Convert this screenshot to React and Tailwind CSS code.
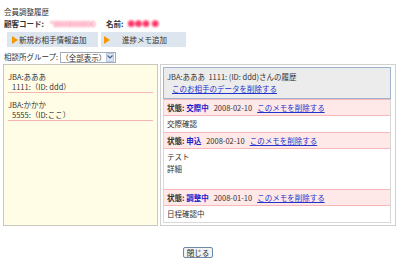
const font = { fontFamily: '"Noto Sans CJK JP", "Liberation Sans", sans-serif' };

const partners = [
  { name: "JBA:あああ", id: "1111:（ID: ddd）" },
  { name: "JBA:かかか", id: "5555:（ID:ここ）" },
];

const memos = [
  { status: "交際中", date: "2008-02-10", lines: ["交際確認"] },
  { status: "申込", date: "2008-02-10", lines: ["テスト", "詳細", ""] },
  { status: "調整中", date: "2008-01-10", lines: ["日程確認中"] },
];

function Triangle() {
  return <span className="inline-block w-0 h-0 border-y-[4px] border-y-transparent border-l-[6px] border-l-[#f39800]" />;
}

function App() {
  return (
    <div className="w-[400px] h-[280px] bg-white text-[#333] text-[7.5px] overflow-hidden" style={font}>
      <div className="px-[4px] pt-[6px]">
        <div className="leading-[12px]">会員調整履歴</div>
        <div className="flex items-center leading-[12px] font-bold">
          <span>顧客コード:</span>
          <span className="ml-[6px] w-[52px] text-[#ff3366] blur-[1.2px] font-normal">*0000000000</span>
          <span className="ml-[4px]">名前:</span>
          <span className="ml-[4px] text-[#ff3366] blur-[1.2px] font-normal">●●● ●</span>
        </div>
        <div className="flex gap-[3px] mt-[2px] h-[15px]">
          <div className="w-[91px] ml-[3px] bg-[#dde5ee] flex items-center pl-[5px] gap-[1px]">
            <Triangle />
            <span>新規お相手情報追加</span>
          </div>
          <div className="w-[85px] bg-[#dde5ee] flex items-center pl-[3px]">
            <Triangle />
            <span className="ml-[12px]">進捗メモ追加</span>
          </div>
        </div>
        <div className="flex items-center h-[12px] mt-[4px]">
          <span>相談所グループ:</span>
          <div className="ml-[2px] flex items-center h-[11px] w-[56px] border border-[#a5acb5] bg-white whitespace-nowrap">
            <span className="flex-1 leading-[9px]">（全部表示）</span>
            <span className="w-[10px] h-[9px] mr-[1px] bg-[#dbe5f5] border border-[#b5c6e0] flex items-center justify-center">
              <svg width="6" height="4" viewBox="0 0 6 4">
                <path d="M0.5 0.5 L3 3 L5.5 0.5" fill="none" stroke="#4d6185" strokeWidth="1.2" />
              </svg>
            </span>
          </div>
        </div>
      </div>

      <div className="flex ml-[3px] mt-[1px] w-[393px] h-[162px] gap-[2px]">
        <div className="w-[155px] bg-[#fffde6] border border-[#c8c8c0] px-[4px]">
          {partners.map((p) => (
            <div key={p.name} className="pt-[7px] border-b border-[#f5b5b5] leading-[10px]">
              <div>{p.name}</div>
              <div className="pl-[4px]">{p.id}</div>
            </div>
          ))}
        </div>
        <div className="flex-1 border border-[#d0d0d0] p-[2px] pr-[4px] flex flex-col">
          <div className="h-[32px] bg-[#ececec] border border-[#9fb3d1] pl-[3px] pt-[3px] leading-[12px]">
            <div>JBA:あああ&nbsp;&nbsp;1111: (ID: ddd)さんの履歴</div>
            <div className="pl-[5px] text-[#2233cc] underline">このお相手のデータを削除する</div>
          </div>
          <div className="border-x border-b border-[#d8d8d8]">
            {memos.map((m) => (
              <div key={m.status}>
                <div className="h-[17px] bg-[#ffe8e8] border-y border-[#f6b8b8] flex items-center pl-[3px] gap-[5px]">
                  <span className="font-bold">
                    状態: <span className="text-[#1a1acc]">{m.status}</span>
                  </span>
                  <span>{m.date}</span>
                  <span className="text-[#2233cc] underline">このメモを削除する</span>
                </div>
                <div className="pl-[3px] py-[2px] leading-[12px]">
                  {m.lines.map((l, i) => (
                    <div key={i} className="h-[12px]">{l}</div>
                  ))}
                </div>
              </div>
            ))}
          </div>
        </div>
      </div>

      <div className="flex justify-center mt-[21px]">
        <button className="h-[11px] px-[3px] ml-[-4px] border border-[#6f87a8] rounded-[2px] bg-[#f2f2f2] text-[7.5px] leading-[9px] text-[#222]" style={font}>
          閉じる
        </button>
      </div>
    </div>
  );
}

export default App;
